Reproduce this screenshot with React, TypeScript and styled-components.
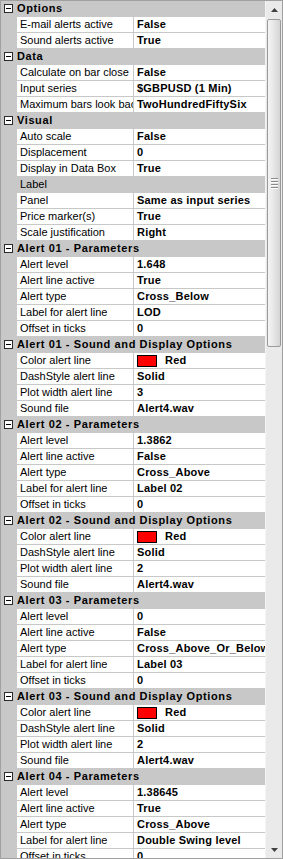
import React from 'react'
import styled, { createGlobalStyle } from 'styled-components'

const GlobalStyle = createGlobalStyle`
    html, body {
        margin: 0;
        padding: 0;
        background: #ffffff;
    }
    body {
        font-family: 'Liberation Sans', Arial, sans-serif;
        font-size: 11px;
        color: #000000;
    }
`

type Prop = { label: string; value?: string; color?: string; disabled?: boolean }
type Group = { title: string; props: Prop[] }

const groups: Group[] = [
    {
        title: 'Options',
        props: [
            { label: 'E-mail alerts active', value: 'False' },
            { label: 'Sound alerts active', value: 'True' },
        ],
    },
    {
        title: 'Data',
        props: [
            { label: 'Calculate on bar close', value: 'False' },
            { label: 'Input series', value: '$GBPUSD (1 Min)' },
            { label: 'Maximum bars look back', value: 'TwoHundredFiftySix' },
        ],
    },
    {
        title: 'Visual',
        props: [
            { label: 'Auto scale', value: 'False' },
            { label: 'Displacement', value: '0' },
            { label: 'Display in Data Box', value: 'True' },
            { label: 'Label', disabled: true },
            { label: 'Panel', value: 'Same as input series' },
            { label: 'Price marker(s)', value: 'True' },
            { label: 'Scale justification', value: 'Right' },
        ],
    },
    {
        title: 'Alert 01 - Parameters',
        props: [
            { label: 'Alert level', value: '1.648' },
            { label: 'Alert line active', value: 'True' },
            { label: 'Alert type', value: 'Cross_Below' },
            { label: 'Label for alert line', value: 'LOD' },
            { label: 'Offset in ticks', value: '0' },
        ],
    },
    {
        title: 'Alert 01 - Sound and Display Options',
        props: [
            { label: 'Color alert line', value: 'Red', color: '#ff0000' },
            { label: 'DashStyle alert line', value: 'Solid' },
            { label: 'Plot width alert line', value: '3' },
            { label: 'Sound file', value: 'Alert4.wav' },
        ],
    },
    {
        title: 'Alert 02 - Parameters',
        props: [
            { label: 'Alert level', value: '1.3862' },
            { label: 'Alert line active', value: 'False' },
            { label: 'Alert type', value: 'Cross_Above' },
            { label: 'Label for alert line', value: 'Label 02' },
            { label: 'Offset in ticks', value: '0' },
        ],
    },
    {
        title: 'Alert 02 - Sound and Display Options',
        props: [
            { label: 'Color alert line', value: 'Red', color: '#ff0000' },
            { label: 'DashStyle alert line', value: 'Solid' },
            { label: 'Plot width alert line', value: '2' },
            { label: 'Sound file', value: 'Alert4.wav' },
        ],
    },
    {
        title: 'Alert 03 - Parameters',
        props: [
            { label: 'Alert level', value: '0' },
            { label: 'Alert line active', value: 'False' },
            { label: 'Alert type', value: 'Cross_Above_Or_Below' },
            { label: 'Label for alert line', value: 'Label 03' },
            { label: 'Offset in ticks', value: '0' },
        ],
    },
    {
        title: 'Alert 03 - Sound and Display Options',
        props: [
            { label: 'Color alert line', value: 'Red', color: '#ff0000' },
            { label: 'DashStyle alert line', value: 'Solid' },
            { label: 'Plot width alert line', value: '2' },
            { label: 'Sound file', value: 'Alert4.wav' },
        ],
    },
    {
        title: 'Alert 04 - Parameters',
        props: [
            { label: 'Alert level', value: '1.38645' },
            { label: 'Alert line active', value: 'True' },
            { label: 'Alert type', value: 'Cross_Above' },
            { label: 'Label for alert line', value: 'Double Swing level' },
            { label: 'Offset in ticks', value: '0' },
        ],
    },
]

export default function App() {
    return (
        <>
            <GlobalStyle />
            <Frame>
                <GridBody>
                    {groups.map((g, gi) => (
                        <React.Fragment key={gi}>
                            <GroupRow>
                                <CollapseBox />
                                <GroupTitle>{g.title}</GroupTitle>
                            </GroupRow>
                            {g.props.map((p, pi) => (
                                <PropRow key={pi} $disabled={p.disabled}>
                                    <Margin />
                                    <LabelCell>{p.label}</LabelCell>
                                    <ValueCell>
                                        {p.color && <Swatch $color={p.color} />}
                                        {p.value}
                                    </ValueCell>
                                </PropRow>
                            ))}
                        </React.Fragment>
                    ))}
                </GridBody>
                <ScrollBar>
                    <ArrowButton>
                        <svg width="7" height="4" viewBox="0 0 7 4">
                            <path d="M0 4 L3.5 0 L7 4 Z" fill="#404040" />
                        </svg>
                    </ArrowButton>
                    <Track>
                        <Thumb>
                            <Grip />
                            <Grip />
                            <Grip />
                            <Grip />
                        </Thumb>
                    </Track>
                    <ArrowButton>
                        <svg width="7" height="4" viewBox="0 0 7 4">
                            <path d="M0 0 L3.5 4 L7 0 Z" fill="#404040" />
                        </svg>
                    </ArrowButton>
                </ScrollBar>
            </Frame>
        </>
    )
}

const Frame = styled.div`
    width: 283px;
    height: 859px;
    box-sizing: border-box;
    border: 1px solid #a0a0a0;
    display: flex;
    overflow: hidden;
    background: #c8c8c8;
`

const GridBody = styled.div`
    width: 264px;
    height: 100%;
    overflow: hidden;
    display: flex;
    flex-direction: column;
    flex-shrink: 0;
`

const GroupRow = styled.div`
    height: 15px;
    margin-bottom: 1px;
    flex-shrink: 0;
    background: #c8c8c8;
    display: flex;
    align-items: center;
    white-space: nowrap;
`

const CollapseBox = styled.span`
    width: 7px;
    height: 7px;
    margin: 0 4px 0 3px;
    border: 1px solid #2b2b2b;
    background: #ffffff;
    position: relative;
    flex-shrink: 0;

    &::after {
        content: '';
        position: absolute;
        left: 1px;
        top: 3px;
        width: 5px;
        height: 1px;
        background: #000000;
    }
`

const GroupTitle = styled.span`
    font-weight: bold;
    letter-spacing: 0.6px;
    line-height: 15px;
`

const PropRow = styled.div<{ $disabled?: boolean }>`
    height: 15px;
    margin-bottom: 1px;
    flex-shrink: 0;
    display: grid;
    grid-template-columns: 15px 116px 132px;
    column-gap: 1px;
    background: #c8c8c8;

    & > div:not(:first-child) {
        background: ${(p) => (p.$disabled ? '#c8c8c8' : '#ffffff')};
    }
`

const Margin = styled.div`
    background: #c8c8c8;
`

const LabelCell = styled.div`
    padding-left: 3px;
    line-height: 15px;
    white-space: nowrap;
    overflow: hidden;
`

const ValueCell = styled.div`
    padding-left: 3px;
    line-height: 15px;
    font-weight: bold;
    letter-spacing: 0.2px;
    white-space: nowrap;
    overflow: hidden;
    display: flex;
    align-items: center;
`

const Swatch = styled.span<{ $color: string }>`
    width: 18px;
    height: 10px;
    border: 1px solid #000000;
    background: ${(p) => p.$color};
    margin-right: 8px;
    flex-shrink: 0;
`

const ScrollBar = styled.div`
    width: 17px;
    height: 100%;
    flex-shrink: 0;
    display: flex;
    flex-direction: column;
    background: #eaeaea;
    border-left: 1px solid #f4f4f4;
    box-sizing: border-box;
`

const ArrowButton = styled.div`
    height: 17px;
    flex-shrink: 0;
    display: flex;
    align-items: center;
    justify-content: center;
`

const Track = styled.div`
    flex: 1;
    padding: 1px 0;
    display: flex;
    flex-direction: column;
`

const Thumb = styled.div`
    height: 326px;
    margin: 0 1px;
    border: 1px solid #9a9a9a;
    border-radius: 2px;
    background: linear-gradient(to right, #f4f4f4, #e6e6e6 50%, #d4d4d4);
    display: flex;
    flex-direction: column;
    align-items: center;
    justify-content: center;
    gap: 1px;
`

const Grip = styled.span`
    width: 7px;
    height: 1px;
    background: #8a8a8a;
    border-bottom: 1px solid #ffffff;
`
